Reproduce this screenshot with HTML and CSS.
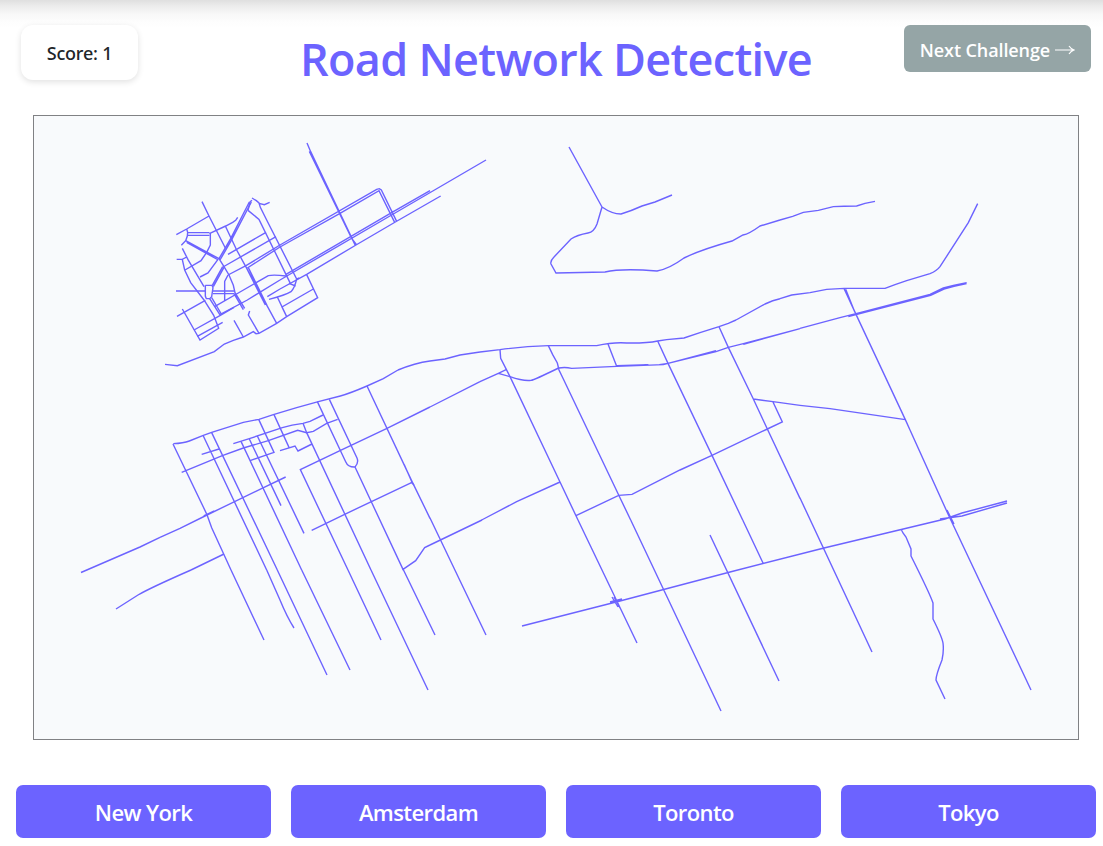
FILE: index.html
```html
<!DOCTYPE html>
<html lang="en">
<head>
<meta charset="utf-8">
<title>Road Network Detective</title>
<link rel="stylesheet" href="styles.css">
</head>
<body>
<div class="app">
  <header class="header">
    <div class="score">Score: 1</div>
    <h1 class="title">Road Network Detective</h1>
    <button class="next">Next Challenge <svg class="arrow" viewBox="0 0 20 14"><path d="M0 7H19M14 3Q16 6 19 7Q16 8 14 11"/></svg></button>
  </header>
  <svg class="map" viewBox="34 116 1044 623">
    <!-- North-west district -->
    <g transform="translate(160 180) scale(.333333)">
      <path d="M126 65L147 108L196 204M49 164L80 147L147 108M80 147L83 157L82 168L77 182L64 196M82 158H148M82 166H148M148 161L197 138L218 127L227 121L233 112M151 161V195L140 217L123 242L75 270"/>
      <path d="M77 182L177 236M80 187L175 240M177 236L192 260L207 285L220 316L225 338L254 385M222 341L250 389M177 236L212 176L268 66M180 240L214 181L274 66M174 238L144 279L120 291"/>
      <path d="M67 205L84 239L132 320M136 316H156L159 323L155 350L149 356H139L136 348V316M67 239L74 270L92 308L132 360L161 406L176 445L120 480L67 387M50 238H67L80 231"/>
      <path d="M48 333H136M159 333H222M159 341H222M157 316L188 260M160 320L192 262M149 356L181 406M155 353L184 402M51 409L136 361M102 450L181 406L222 382M112 469L188 427"/>
      <path d="M264 91L270 66L276 61M276 54L289 62L297 69L301 82L320 120L410 297M297 70L313 74L329 67M264 91L297 118L391 310M196 138L230 210L259 263L350 430M259 263L316 375M265 263L322 378"/>
      <path d="M204 223L318 157M189 261L348 170M204 285L258 257L360 195M262 264L360 201M165 379L240 336L325 287Q340 283 378 288M181 403L262 360L360 300M194 363V304L204 285"/>
      <path d="M322 350L360 327M327 358Q377 345 393 335Q403 326 410 297L418 294M387 310L407 318M352 351L380 410L366 381L460 327M440 284L473 353L380 410L350 430L297 460L288 461L280 455L250 471L220 481L193 492L163 515L52 557L15 553M222 421L250 471M269 393L265 405L297 460"/>
    </g>
    <g transform="translate(280 130) scale(.333333)">
      <path d="M81 39L92 65L226 346M88 64L215 325L230 345M0 345L290 178L298 176L304 180L350 274M0 351L180 250L297 182L344 277M18 433L340 245L450 182M0 450L340 252L618 90M0 477L80 433L228 345L346 276L482 198"/>
    </g>
    <!-- South-west district -->
    <g transform="translate(160 370) scale(.333333)">
      <path d="M0 502L60 475L141 435L306 355L377 321M131 438L163 423M93 600L192 552M40 221Q70 220 88 213L130 196L155 187L250 157L297 148L340 134L410 113L475 95L541 78Q570 70 621 48L670 26L714 0"/>
      <path d="M39 222L141 434L155 473L213 600M130 198L320 600M155 188L352 600M65 307L187 257L250 234L325 212L413 181L440 188L460 184L500 160L533 148M125 253L177 237M220 221L268 206L367 173Q395 164 429 160L450 154L489 135"/>
      <path d="M243 214L425 600M268 207L363 407M292 198L432 490M296 148L342 247L270 272M342 134L387 232M360 242L405 228L414 243L456 222M429 160L440 188L633 600"/>
      <path d="M472 95L557 275Q564 292 585 291Q597 278 591 264L508 88M585 291L729 598L767 572L794 533L810 525M564 600L421 299L540 242L681 175L810 111M455 481L554 433L756 337M621 48L753 328L810 445M733 284L756 337"/>
    </g>
    <!-- Central blocks -->
    <g transform="translate(480 320) scale(.333333)">
      <path d="M0 96L60 89Q130 79 205 77H350Q400 66 440 69Q500 70 533 63L560 59L612 54L660 38L717 20L745 10L768 0M0 185L55 160L80 148M55 160L90 170Q130 184 153 181Q162 180 236 144Q256 141 275 145L410 139L550 134L708 92M410 137L505 134M538 134L564 130L708 95L745 82L790 71L960 26M790 73L952 28"/>
      <path d="M60 89L62 115L90 170L240 486L294 600M205 77L218 104L232 129L237 150L250 177L416 525L452 600M384 72L410 139M533 63L564 130L696 406L788 600M717 20L745 82L820 237L862 327L960 535M5 600L110 545L240 486M288 587L416 526L456 523L600 450L696 406L862 327L907 306L879 246M820 237L879 245L960 256"/>
    </g>
    <!-- Eastern shore -->
    <g transform="translate(780 190) scale(.333333)">
      <path d="M0 90L38 79L70 67L115 61L160 50Q190 48 230 48L255 40L285 34M0 326L35 315L90 308L140 298L193 295H315Q350 282 380 272L450 251Q470 243 480 230L565 98L593 41M60 415L180 383L228 371L450 313L490 294L520 286L560 278M205 380L452 316L492 297L522 289L560 281M192 295L228 373L376 689L390 720M197 298L224 365M60 646L150 656L376 689"/>
    </g>
    <!-- Links between districts -->
    <path d="M398 370Q415 363 430 361L445 359L460 355L480 352M430 407L480 381.7M736 320L765 304Q773 300 780 298.7"/>
    <!-- Long avenues -->
    <path d="M569 147L602 207L597 224Q594 232 588 233Q577 235 571 239L554 257Q550 261 551 264L556 273L605 272Q622 268 657 271Q669 269 684 258Q700 250 732 241L743 235Q749 234 760 226L780 220M602 207Q612 214 621 214Q631 211 642 206L655 202L672 195"/>
    <path d="M81 572.5L140 547L160 537.3M116 609L138 595Q150 588 191 570M231 570L264 640M266.7 570L280 600Q287 617 294 628M277.3 570L327 675M301.7 570L350 670M348 570L381 640M371 570L428 690M403 569L435 635M430 545L482 520M430 518L486 635M411 482L414 485"/>
    <path d="M578 520L637 643M614 597L620 608M612 597L618 607M610 602L622 599M630.7 520L721 711M742.7 520L763 563M800 498L872 652M522 626L620 601L730 572L824 548L945 519L962 513L1007 501M940 519L962 516L1007 503M710 535L779 681M910 430L948 514L1031 690M947 510L954 524M901 529L903 533L906 537L911 549V556Q930 594 933 603V619Q942 637 943 643Q944 651 942 660Q936 675 936 680L945 699"/>
  </svg>
  <div class="choices">
    <button class="choice">New York</button>
    <button class="choice">Amsterdam</button>
    <button class="choice">Toronto</button>
    <button class="choice">Tokyo</button>
  </div>
</div>
</body>
</html>
```
FILE: styles.css
```css
* { box-sizing: border-box; }
body {
  margin: 0;
  width: 1103px;
  height: 846px;
  overflow: hidden;
  background: #fff;
  font-family: "Open Sans", sans-serif;
}
.app {
  height: 846px;
  background: linear-gradient(#dfdfdf 0, #ececec 6px, #f8f8f8 14px, #fdfdfd 22px, #fff 28px);
}
.header {
  display: flex;
  align-items: flex-start;
  justify-content: space-between;
  height: 115px;
  padding: 25px 12px 0 21px;
}
.score {
  width: 117px;
  height: 55px;
  border-radius: 12px;
  background: #fff;
  box-shadow: 0 2px 6px rgba(0, 0, 0, .12);
  color: #212529;
  font: 500 18px/57px "Noto Sans", sans-serif;
  letter-spacing: -.2px;
  text-align: center;
}
.title {
  margin: 0 0 0 70px;
  color: #6c63ff;
  font: 600 45px/67px "Open Sans", sans-serif;
  letter-spacing: -.7px;
  white-space: nowrap;
}
.next {
  display: flex;
  align-items: center;
  justify-content: center;
  gap: 5px;
  width: 187px;
  height: 47px;
  padding: 2px 0 0;
  border: 0;
  border-radius: 6px;
  background: #95a5a6;
  color: #fff;
  font: 600 18px "Open Sans", sans-serif;
  letter-spacing: -.1px;
  white-space: nowrap;
}
.arrow {
  width: 20px;
  height: 14px;
  fill: none;
  stroke: #fff;
  stroke-width: 1.2;
}
.map {
  display: block;
  width: 1046px;
  height: 625px;
  margin: 0 0 0 33px;
  border: 1px solid #808184;
  background: #f8fafc;
}
.map path {
  fill: none;
  stroke: #6c63ff;
  stroke-width: 1.4;
  vector-effect: non-scaling-stroke;
}
.choices {
  display: grid;
  grid-template-columns: repeat(4, 255px);
  gap: 20px;
  padding: 45px 0 0 16px;
}
.choice {
  height: 53px;
  padding: 1px 0 0;
  border: 0;
  border-radius: 7px;
  background: #6c63ff;
  color: #fff;
  font: 600 22px/52px "Open Sans", sans-serif;
  letter-spacing: -.6px;
}
```
